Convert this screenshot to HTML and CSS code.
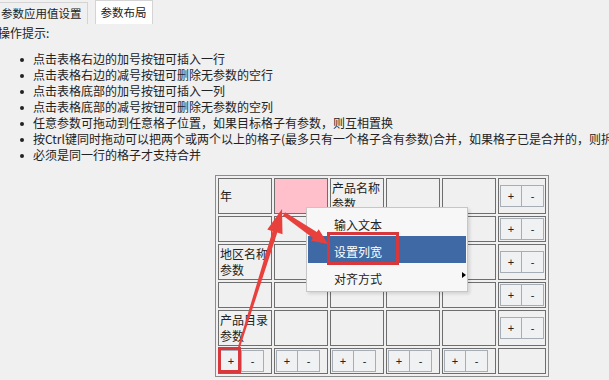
FILE: index.html
```html
<!DOCTYPE html>
<html lang="zh">
<head>
<meta charset="utf-8">
<title>参数布局</title>
<link rel="stylesheet" href="styles.css">
</head>
<body>
<div class="page">
  <div class="tabs">
    <div class="tab">参数应用值设置</div>
    <div class="tab active">参数布局</div>
  </div>
  <div class="hint">操作提示:</div>
  <ul class="tips">
    <li>点击表格右边的加号按钮可插入一行</li>
    <li>点击表格右边的减号按钮可删除无参数的空行</li>
    <li>点击表格底部的加号按钮可插入一列</li>
    <li>点击表格底部的减号按钮可删除无参数的空列</li>
    <li>任意参数可拖动到任意格子位置，如果目标格子有参数，则互相置换</li>
    <li>按Ctrl键同时拖动可以把两个或两个以上的格子(最多只有一个格子含有参数)合并，如果格子已是合并的，则拆分格子</li>
    <li>必须是同一行的格子才支持合并</li>
  </ul>
  <table class="board">
    <tr>
      <td>年</td><td class="pink"></td><td>产品名称参数</td><td></td><td></td>
      <td class="ops"><div class="btns"><span class="btn">+</span><span class="btn">-</span></div></td>
    </tr>
    <tr>
      <td></td><td></td><td></td><td></td><td></td>
      <td class="ops"><div class="btns"><span class="btn">+</span><span class="btn">-</span></div></td>
    </tr>
    <tr>
      <td>地区名称参数</td><td></td><td></td><td></td><td></td>
      <td class="ops"><div class="btns"><span class="btn">+</span><span class="btn">-</span></div></td>
    </tr>
    <tr>
      <td></td><td></td><td></td><td></td><td></td>
      <td class="ops"><div class="btns"><span class="btn">+</span><span class="btn">-</span></div></td>
    </tr>
    <tr>
      <td>产品目录参数</td><td></td><td></td><td></td><td></td>
      <td class="ops"><div class="btns"><span class="btn">+</span><span class="btn">-</span></div></td>
    </tr>
    <tr>
      <td><div class="btns"><span class="btn">+</span><span class="btn">-</span></div></td>
      <td><div class="btns"><span class="btn">+</span><span class="btn">-</span></div></td>
      <td><div class="btns"><span class="btn">+</span><span class="btn">-</span></div></td>
      <td><div class="btns"><span class="btn">+</span><span class="btn">-</span></div></td>
      <td><div class="btns"><span class="btn">+</span><span class="btn">-</span></div></td>
      <td class="ops"></td>
    </tr>
  </table>

  <div class="menu">
    <div class="item">输入文本</div>
    <div class="item on">设置列宽</div>
    <div class="item">对齐方式<span class="sub"></span></div>
  </div>

  <div class="mark mark-menu"></div>
  <div class="mark mark-plus"></div>

  <svg class="arrows" width="609" height="380" viewBox="0 0 609 380">
    <polygon fill="#e8403c" points="238,346.7 272.5,231.2 267.3,229.5 282,209 282.5,234.3 277.3,232.6 240,347.3"/>
    <polygon fill="#e8403c" points="285.1,212.3 316.8,232.1 318.7,229.2 328,244 310.9,240.8 312.8,237.9 282.9,215.6"/>
  </svg>
</div>
</body>
</html>
```
FILE: styles.css
```css
html, body {
  margin: 0;
  padding: 0;
  background: #f0f0f0;
}

.page {
  position: relative;
  width: 609px;
  height: 380px;
  overflow: hidden;
  font-family: "Noto Sans CJK SC", "Microsoft YaHei", sans-serif;
  font-size: 12px;
  color: #222;
}

.tabs {
  display: flex;
  align-items: flex-end;
  height: 24px;
  margin-left: -5px;
}

.tab {
  box-sizing: border-box;
  height: 22px;
  line-height: 21px;
  padding: 0 5px;
  border: 1px solid #d4d4d4;
  border-bottom: none;
  font-size: 11.5px;
  background: #f0f0f0;
  white-space: nowrap;
}

.tab.active {
  height: 24px;
  line-height: 23px;
  margin-left: 7px;
  background: #fff;
}

.hint {
  line-height: 16px;
  margin-top: 1px;
  margin-left: -2px;
}

.tips {
  list-style: none;
  margin: 10px 0 0;
  padding: 0 0 0 33px;
  white-space: nowrap;
}

.tips li {
  position: relative;
  line-height: 16px;
}

.tips li::before {
  content: "";
  position: absolute;
  left: -13px;
  top: 7px;
  width: 4px;
  height: 4px;
  border-radius: 50%;
  background: #222;
}

.board {
  margin: 12px 0 0 215px;
  border-collapse: separate;
  border-spacing: 2px;
  border: 1px solid #8c8c8c;
}

.board td {
  box-sizing: content-box;
  width: 50px;
  padding: 1px;
  border: 1px solid #6e6e6e;
  line-height: 16px;
  vertical-align: middle;
  background: #f0f0f0;
}

.board td.ops {
  width: 44px;
}

.board td.pink {
  background: #ffc0cb;
}

.btns {
  display: flex;
}

.btn {
  box-sizing: border-box;
  width: 22px;
  height: 22px;
  border: 1px solid #a6adb4;
  background: #f0f1f2;
  display: flex;
  align-items: center;
  justify-content: center;
  font-family: "Liberation Sans", Arial, sans-serif;
  font-size: 11px;
  color: #222;
}

.btn + .btn {
  border-left: none;
}

.menu {
  position: absolute;
  left: 306px;
  top: 207px;
  width: 162px;
  box-sizing: border-box;
  border: 1px solid #c6c6c6;
  background: #f7f7f7;
  padding: 1px;
  box-shadow: 2px 2px 3px rgba(0, 0, 0, 0.12);
}

.item {
  position: relative;
  height: 25px;
  padding-top: 2px;
  line-height: 27px;
  padding-left: 26px;
  color: #222;
}

.item.on {
  background: #3f69a5;
  color: #fff;
}

.sub {
  position: absolute;
  right: 0;
  top: 9px;
  width: 0;
  height: 0;
  border-left: 4px solid #000;
  border-top: 3.5px solid transparent;
  border-bottom: 3.5px solid transparent;
}

.mark {
  position: absolute;
  box-sizing: border-box;
  border: 3px solid #d8383c;
}

.mark-menu {
  left: 327px;
  top: 232px;
  width: 72px;
  height: 33px;
}

.mark-plus {
  left: 218px;
  top: 347px;
  width: 23px;
  height: 26px;
}

.arrows {
  position: absolute;
  left: 0;
  top: 0;
  pointer-events: none;
}
```
